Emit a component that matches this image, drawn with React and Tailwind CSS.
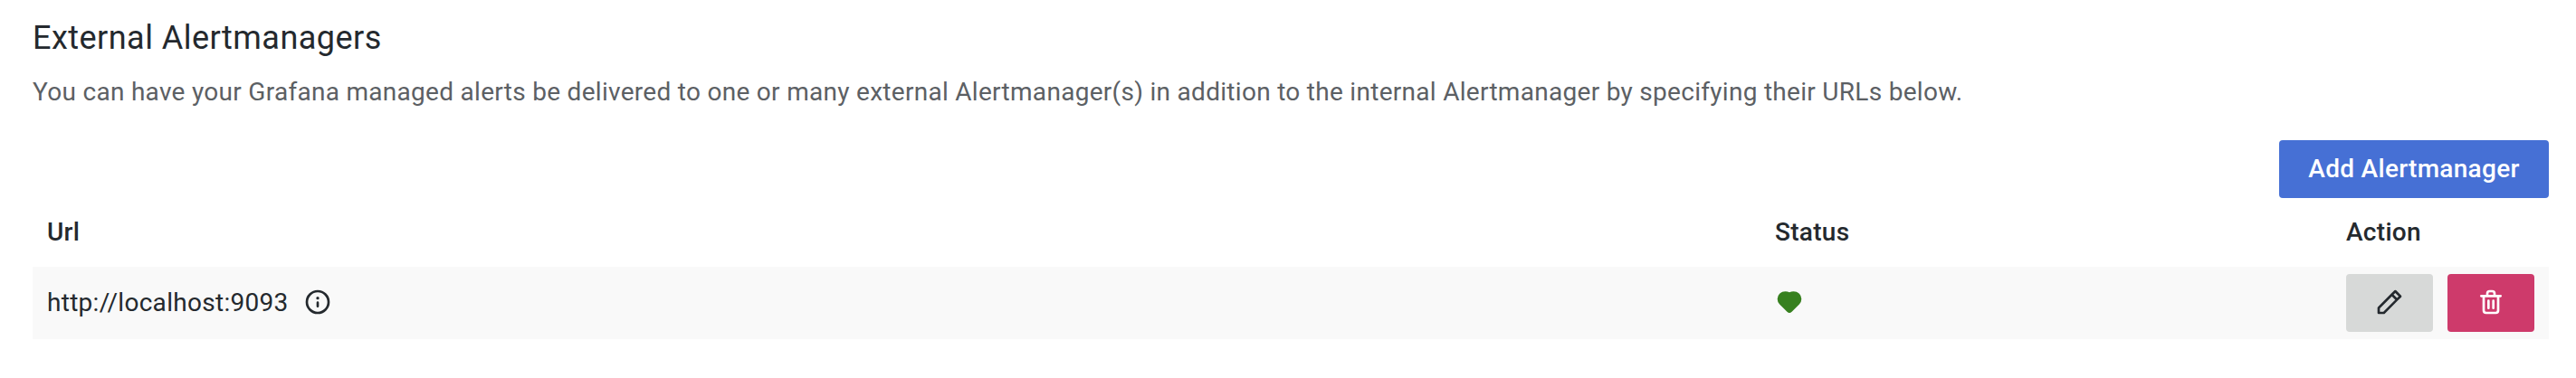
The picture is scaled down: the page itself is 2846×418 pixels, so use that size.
function Icon({ path, className = "" }) {
  return (
    <svg viewBox="0 0 24 24" fill="currentColor" aria-hidden="true" className={`mb-0.5 size-8 shrink-0 ${className}`}>
      <path d={path} />
    </svg>
  );
}

const icons = {
  pen: "M22,7.24a1,1,0,0,0-.29-.71L17.47,2.29A1,1,0,0,0,16.76,2a1,1,0,0,0-.71.29L13.22,5.12h0L2.29,16.05a1,1,0,0,0-.29.71V21a1,1,0,0,0,1,1H7.24A1,1,0,0,0,8,21.71L18.87,10.78h0L21.71,8a1.19,1.19,0,0,0,.22-.33,1,1,0,0,0,0-.24.7.7,0,0,0,0-.14ZM6.83,20H4V17.17l9.93-9.93,2.83,2.83ZM18.17,8.66,15.34,5.83l1.42-1.41,2.82,2.82Z",
  trash: "M10,18a1,1,0,0,0,1-1V11a1,1,0,0,0-2,0v6A1,1,0,0,0,10,18ZM20,6H16V5a3,3,0,0,0-3-3H11A3,3,0,0,0,8,5V6H4A1,1,0,0,0,4,8H5V19a3,3,0,0,0,3,3h8a3,3,0,0,0,3-3V8h1a1,1,0,0,0,0-2ZM10,5a1,1,0,0,1,1-1h2a1,1,0,0,1,1,1V6H10Zm7,14a1,1,0,0,1-1,1H8a1,1,0,0,1-1-1V8H17Zm-3-1a1,1,0,0,0,1-1V11a1,1,0,0,0-2,0v6A1,1,0,0,0,14,18Z",
  info: "M12,2A10,10,0,1,0,22,12,10.01114,10.01114,0,0,0,12,2Zm0,18a8,8,0,1,1,8-8A8.00917,8.00917,0,0,1,12,20Zm0-8.5a1,1,0,0,0-1,1v3a1,1,0,0,0,2,0v-3A1,1,0,0,0,12,11.5Zm0-4a1.25,1.25,0,1,0,1.25,1.25A1.25,1.25,0,0,0,12,7.5Z",
  heart: "M20.16,5C18,2.9,14.5,2.6,12,4C9.5,2.6,6,2.9,3.84,5a6.27,6.27,0,0,0,0,8.84l6.21,6.22a2.78,2.78,0,0,0,3.9,0l6.21-6.22A6.27,6.27,0,0,0,20.16,5Z",
};

const alertmanagers = [{ url: "http://localhost:9093" }];

export default function App() {
  return (
    <main className="flex h-[418px] flex-col bg-white pt-[18px] pr-[30px] pl-9 font-[Roboto,sans-serif] text-[28px] leading-[44px] tracking-[0.29px] text-[#24292e]">
      <h4 className="text-[36px] leading-[48px] font-normal tracking-[0.47px]">External Alertmanagers</h4>
      <p className="mt-3.5 text-[#5c6064]">
        You can have your Grafana managed alerts be delivered to one or many external Alertmanager(s) in addition to
        the internal Alertmanager by specifying their URLs below.
      </p>
      <button className="mt-[31px] flex h-16 w-[298px] items-center justify-center self-end rounded bg-[#4670d5] font-medium text-white">
        Add Alertmanager
      </button>
      <table className="w-full table-fixed border-collapse text-left">
        <colgroup>
          <col className="w-[1909px]" />
          <col className="w-[631px]" />
          <col />
        </colgroup>
        <thead>
          <tr className="h-[76px]">
            <th className="p-0 pl-4 font-medium">Url</th>
            <th className="p-0 pl-4 font-medium">Status</th>
            <th className="p-0 pl-4 font-medium">Action</th>
          </tr>
        </thead>
        <tbody>
          {alertmanagers.map(({ url }) => (
            <tr key={url} className="h-20 bg-[#f9f9f9]">
              <td className="p-0 pl-4">
                <div className="flex items-center gap-4">
                  <span>{url}</span>
                  <Icon path={icons.info} />
                </div>
              </td>
              <td className="p-0 pl-4">
                <Icon path={icons.heart} className="text-[#37801f]" />
              </td>
              <td className="p-0 pl-4">
                <div className="flex gap-4">
                  <button aria-label="Edit" className="flex h-16 w-24 items-center justify-center rounded bg-[#d7d9d8]">
                    <Icon path={icons.pen} />
                  </button>
                  <button
                    aria-label="Delete"
                    className="flex h-16 w-24 items-center justify-center rounded bg-[#ce3a6b] text-white"
                  >
                    <Icon path={icons.trash} />
                  </button>
                </div>
              </td>
            </tr>
          ))}
        </tbody>
      </table>
    </main>
  );
}
